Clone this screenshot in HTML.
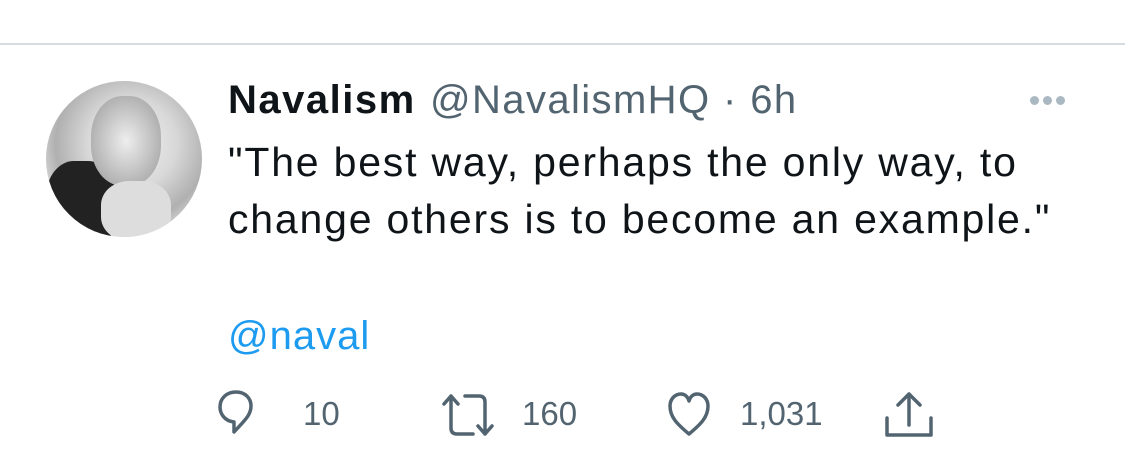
<!DOCTYPE html>
<html><head><style>
body{margin:0;width:1125px;height:466px;background:#fff;font-family:"Liberation Sans",Arial,sans-serif;position:relative;overflow:hidden}
.a{position:absolute;white-space:nowrap}
.n{left:228px;top:78px;font-size:40px;font-weight:bold;color:#0f1419;letter-spacing:1.5px}
.h{left:430px;top:78px;font-size:40px;color:#536471;letter-spacing:1.4px}
.t{left:228px;font-size:41px;color:#0f1419;letter-spacing:1.8px}
.c{font-size:33px;color:#536471;top:395px}
</style></head><body>
<div class="a" style="left:0;top:43px;width:1125px;height:2px;background:#d6dcdf"></div>
<div class="a" style="left:46px;top:81px;width:156px;height:156px;border-radius:50%;overflow:hidden;background:radial-gradient(circle at 55% 40%,#f2f2f2 0,#d8d8d8 35%,#b0b0b0 60%,#e8e8e8 80%);">
<div style="position:absolute;left:0;top:80px;width:70px;height:90px;background:#222;border-radius:40%"></div>
<div style="position:absolute;left:45px;top:15px;width:70px;height:90px;background:radial-gradient(#eee,#999);border-radius:45%"></div>
<div style="position:absolute;left:55px;top:100px;width:70px;height:60px;background:#ddd;border-radius:40%"></div>
</div>
<div class="a n">Navalism</div>
<div class="a h">@NavalismHQ · 6h</div>
<div class="a" style="left:1030px;top:96px;font-size:0">
<span style="display:inline-block;width:9px;height:9px;border-radius:50%;background:#aab8c2;margin-right:4px"></span><span style="display:inline-block;width:9px;height:9px;border-radius:50%;background:#aab8c2;margin-right:4px"></span><span style="display:inline-block;width:9px;height:9px;border-radius:50%;background:#aab8c2"></span></div>
<div class="a t" style="top:139px">"The best way, perhaps the only way, to</div>
<div class="a t" style="top:196px">change others is to become an example."</div>
<div class="a t" style="top:314px;color:#1d9bf0;font-size:40px;letter-spacing:1px">@naval</div>
<svg class="a" style="left:215px;top:388px" width="730" height="56" fill="none" stroke="#536471" stroke-width="3.5" stroke-linecap="round" stroke-linejoin="round">
<path d="M19 44 V34 C9 33 5 25 5 19 C5 10 12 4 21 4 C30 4 36 10 36 18 C36 27 30 32 19 44Z"/>
<path d="M236 8 L236 40 Q236 46 242 46 L258 46 M229 16 L236 8 L243 16"/>
<path d="M250 8 L264 8 Q270 8 270 14 L270 46 M263 38 L270 46 L277 38"/>
<path d="M474 46 C462 36 455 29 455 18 C455 11 460 6 466 6 C470 6 473 9 474 13 C475 9 478 6 482 6 C488 6 493 11 493 18 C493 29 486 36 474 46Z"/>
<path d="M672 30 V47 H716 V30 M694 37 V6 M683 17 L694 6 L705 17"/>
</svg>
<div class="a c" style="left:303px">10</div>
<div class="a c" style="left:522px">160</div>
<div class="a c" style="left:740px">1,031</div>
</body></html>
